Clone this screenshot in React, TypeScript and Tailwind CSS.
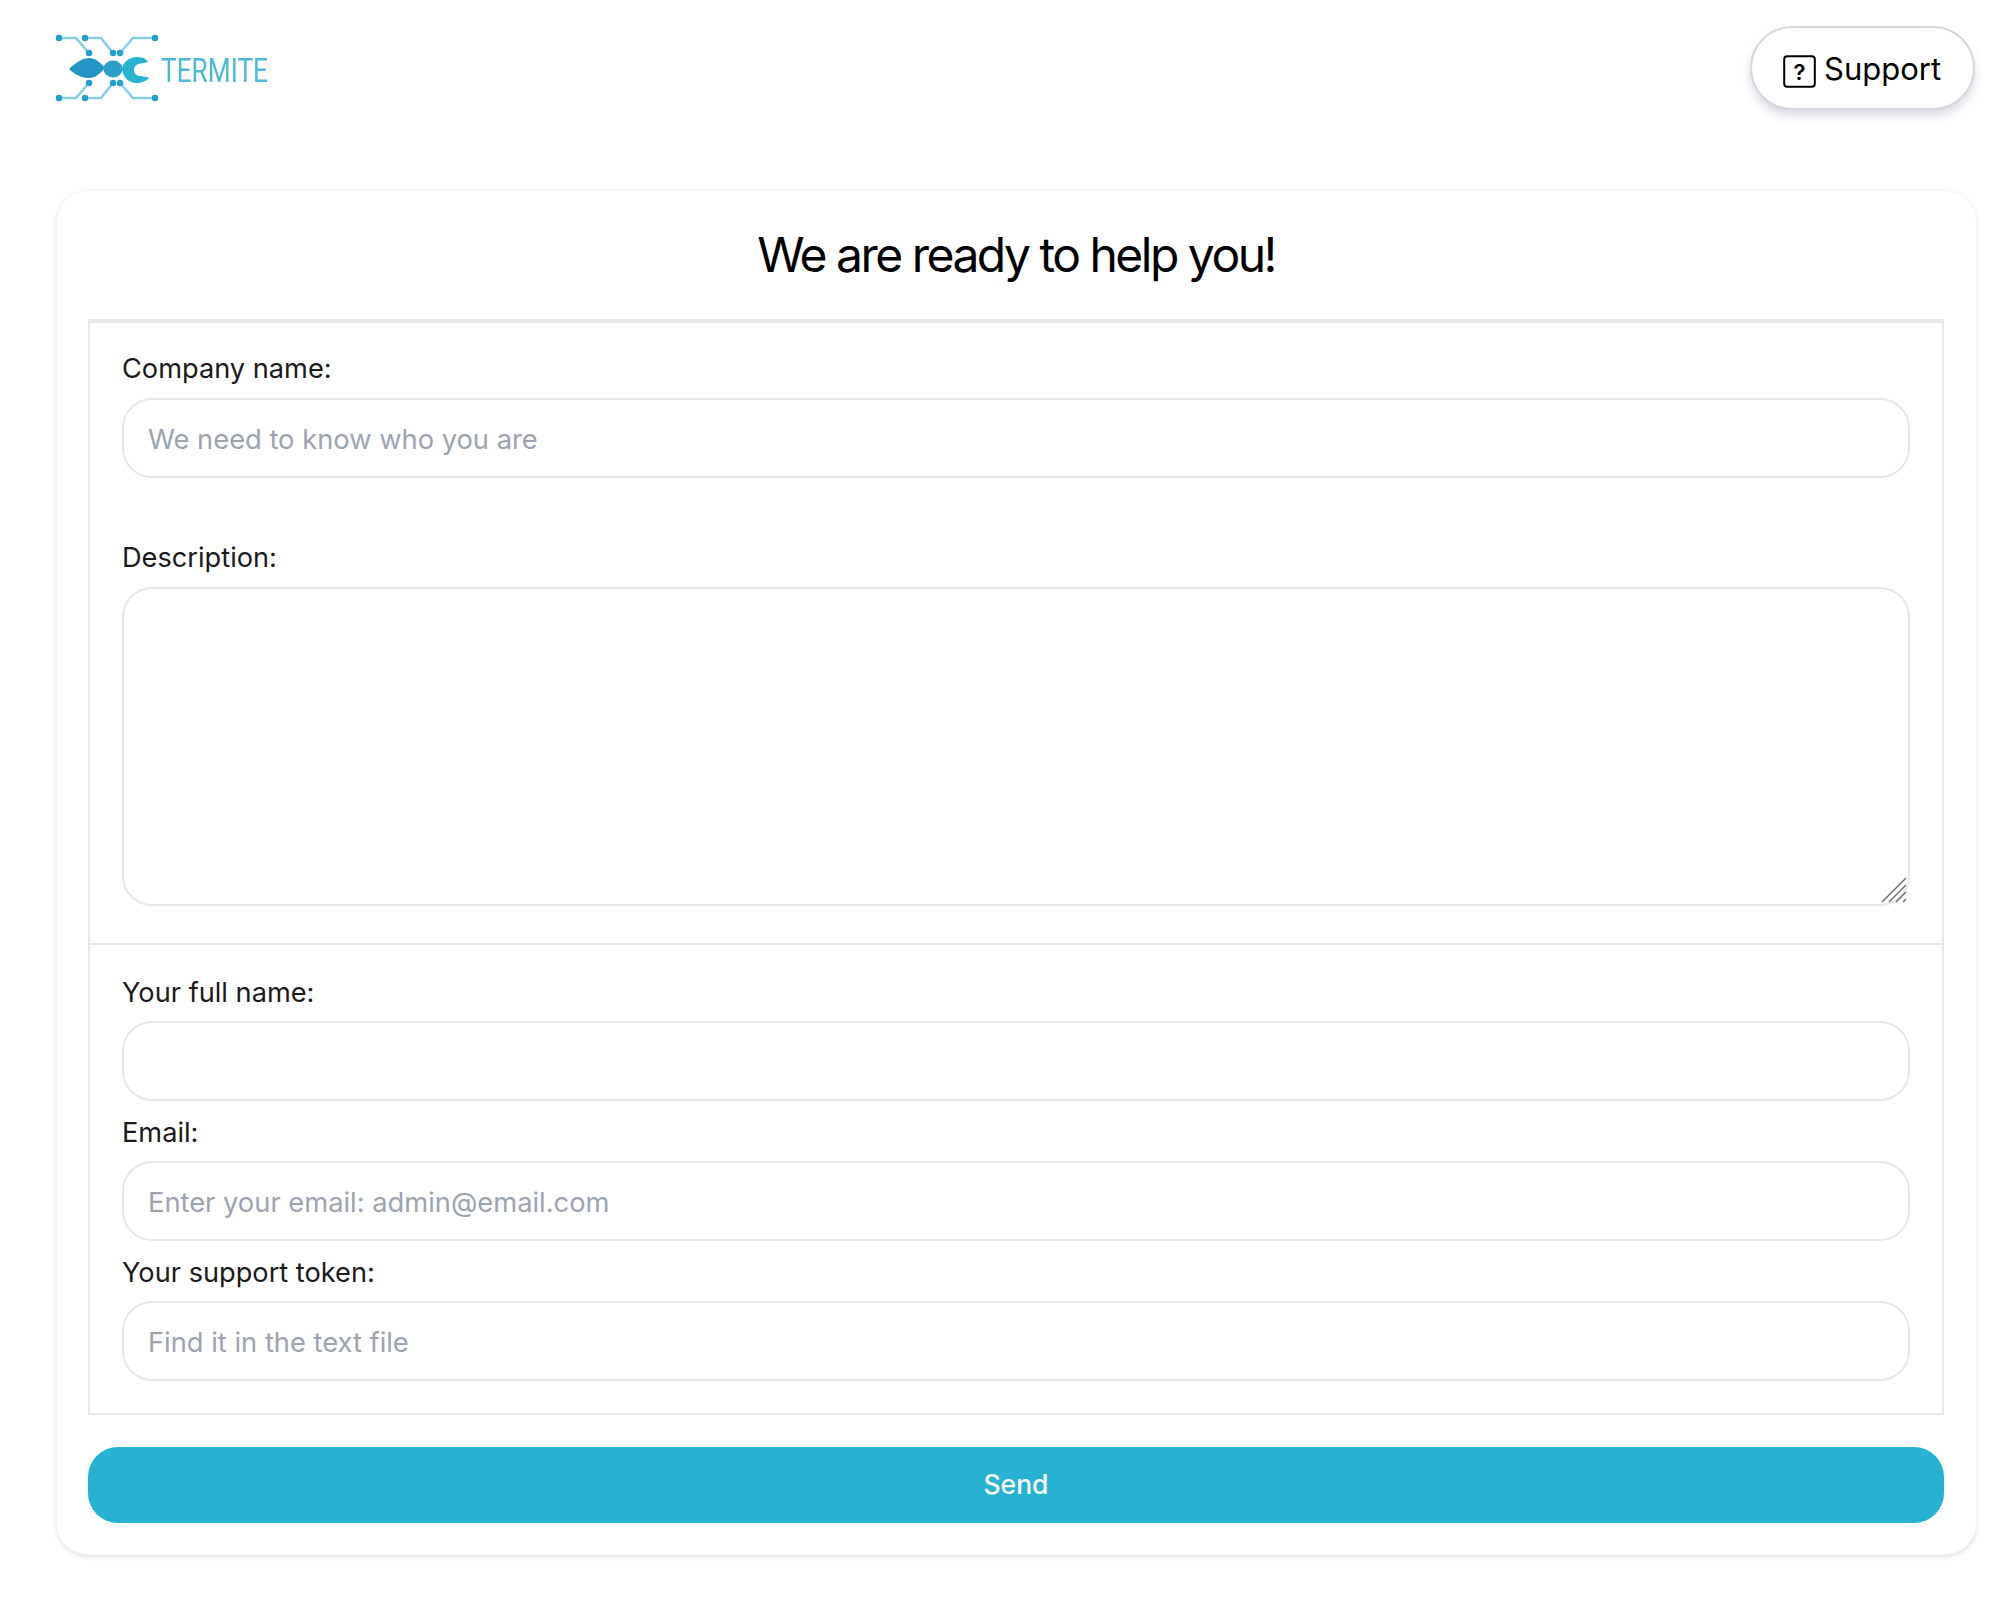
import React from "react";

function Logo() {
  const c = "#86cfe3";
  const d = "#1f9fc9";
  return (
    <svg width="280" height="80" viewBox="50 30 280 80" className="block blur-[0.4px]">
      <g fill="none" stroke={c} strokeWidth="2.6">
        <path d="M58 38H75L88 53" />
        <path d="M84 38H100L112 53" />
        <path d="M154 38H132L119 53" />
        <path d="M58 98H75L88 83" />
        <path d="M84 98H100L112 83" />
        <path d="M154 98H132L119 83" />
      </g>
      <g fill={d}>
        {[[58,38],[84,38],[154,38],[88,53],[112,53],[119,53],[58,98],[84,98],[154,98],[88,83],[112,83],[119,83]].map(([x,y],i)=>(
          <circle key={i} cx={x} cy={y} r="3.200" />
        ))}
      </g>
      <path d="M68 69C76 61 84 58 88 58C94 58 99 62 104 68C99 74 94 78 88 78C84 78 76 77 68 69Z" fill="#2295c6" />
      <ellipse cx="112" cy="69" rx="9.500" ry="8.500" fill="#2a9fc8" />
      <path d="M121 69C122 62 128 57 136 57L143 58L147.500 62L140 63.500C135 64 133 67 133 70C133 74 136 76 140 76L148 77.500C146 81 141 83 135 83C127 83 122 76 121 69Z" fill="#27b2d2" />
      <text x="160" y="82" textLength="107" lengthAdjust="spacingAndGlyphs" fontFamily="Roboto, sans-serif" fontWeight="400" fontSize="33" fill="#4db9d6">TERMITE</text>
    </svg>
  );
}

function Field({ label, placeholder, className, labelGap }: { label: string; placeholder?: string; className?: string; labelGap: string }) {
  return (
    <div className={className}>
      <label className={"block text-[27.2px] leading-[39px] text-[#1a1a1a] " + labelGap}>{label}</label>
      <input
        placeholder={placeholder}
        className="block w-full h-[80px] rounded-[30px] border-2 border-[#e5e7eb] px-[24px] pt-[2px] text-[27.3px] bg-white outline-none placeholder:text-[#9ca3af]"
      />
    </div>
  );
}

export default function App() {
  return (
    <div className="min-h-[1608px] bg-white font-['Inter',sans-serif]">
      <header className="flex items-start justify-between pl-[51px] pr-[37px] pt-[26px] h-[190px]">
        <div className="mt-[4px]"><Logo /></div>
        <button className="flex items-center gap-[8px] h-[84px] w-[225px] pl-[31px] pt-[2px] rounded-[42px] border-2 border-[#d5d7de] bg-white shadow-[0_6px_10px_rgba(170,175,190,0.45)] text-[31px] text-black">
          <svg width="33" height="33" viewBox="0 0 33 33" className="mt-[4px]" fill="none">
            <rect x="1.200" y="1.200" width="30.600" height="30.600" rx="3" stroke="#000" strokeWidth="2" />
            <text x="16.500" y="24.500" textAnchor="middle" fontFamily="Inter, sans-serif" fontWeight="600" fontSize="22" fill="#000">?</text>
          </svg>
          Support
        </button>
      </header>
      <main className="ml-[56px] w-[1921px] h-[1365px] rounded-[32px] bg-white border border-[#f5f5f7] shadow-[0_2px_4px_rgba(170,175,190,0.35)] pl-[31px] pr-[32px] pt-[36px]">
        <h1 className="text-center text-[48px] leading-[56px] font-normal tracking-[-2.5px] text-black mb-[36px]">We are ready to help you!</h1>
        <div className="border-2 border-t-4 border-[#e7e7ee]">
          <section className="px-[32px] pt-[26px] pb-[37px] border-b-2 border-[#e7e7ee]">
            <Field label="Company name:" labelGap="mb-[10px]" placeholder="We need to know who you are" className="mb-[60px]" />
            <label className="block text-[27.2px] leading-[39px] text-[#1a1a1a] mb-[10px]">Description:</label>
            <div className="relative">
              <textarea className="block w-full h-[319px] rounded-[30px] border-2 border-[#e5e7eb] px-[24px] py-[12px] text-[27.2px] bg-white outline-none resize-none" />
              <svg width="26" height="26" viewBox="0 0 26 26" className="absolute right-[3px] bottom-[3px]" fill="none" stroke="#707070" strokeWidth="1.500">
                <path d="M1 25L25 1M8 25L25 8M15 25L25 15M22 25L25 22" />
              </svg>
            </div>
          </section>
          <section className="px-[32px] pt-[28px] pb-[32px] flex flex-col gap-[12px]">
            <Field label="Your full name:" labelGap="mb-[9px]" />
            <Field label="Email:" labelGap="mb-[9px]" placeholder="Enter your email: admin@email.com" />
            <Field label="Your support token:" labelGap="mb-[9px]" placeholder="Find it in the text file" />
          </section>
        </div>
        <button className="block w-full h-[76px] mt-[32px] rounded-[30px] bg-[#26b2d2] text-white text-[26.5px] font-medium">Send</button>
      </main>
    </div>
  );
}
